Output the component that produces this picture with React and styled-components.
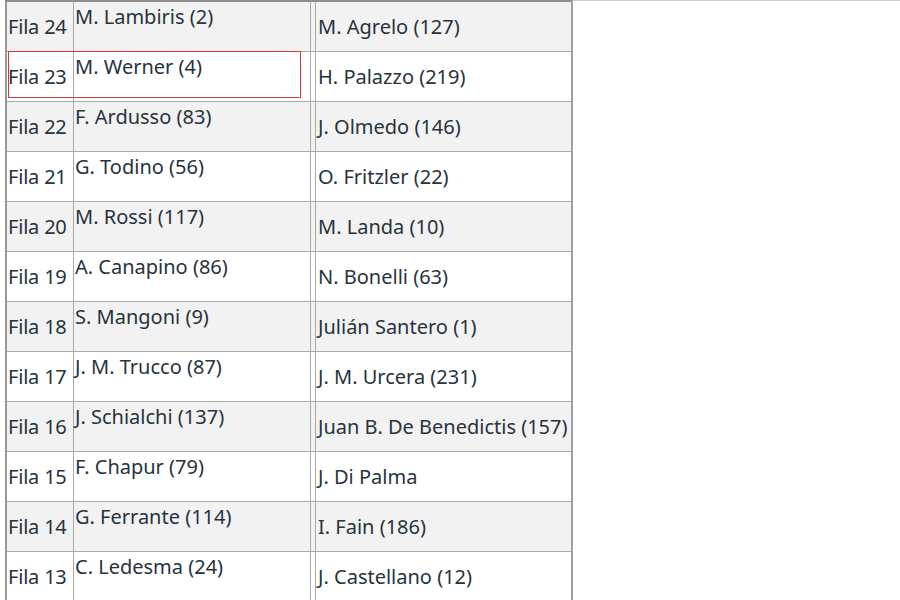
import styled, { createGlobalStyle } from "styled-components";

const GlobalStyle = createGlobalStyle`
  body {
    margin: 0;
    background: #fff;
    font-family: "Noto Sans", "Open Sans", sans-serif;
    overflow: hidden;
  }
`;

const Page = styled.div`
  display: flex;
  align-items: flex-start;
  padding-left: 5px;
`;

const Rest = styled.div`
  flex: 1;
  border-top: 1px solid #cfcfcf;
`;

const TableWrap = styled.div`
  position: relative;
`;

const Table = styled.table`
  border-collapse: collapse;
  border-top: 2px solid #8e8e8e;
  border-left: 2px solid #9a9a9a;
  border-right: 2px solid #a0a0a0;
  color: #27333d;
  font-size: 20px;
  line-height: 22px;
`;

const Row = styled.tr`
  height: 50px;
  background: ${({ $shaded }) => ($shaded ? "#f2f2f2" : "#ffffff")};
  border-bottom: 1px solid #a9a9a9;
`;

const LabelCell = styled.td`
  width: 65px;
  padding: 1px 0 0 1px;
  vertical-align: middle;
  white-space: nowrap;
  letter-spacing: -0.2px;
  border-right: 1px solid #a9a9a9;
`;

const NameCell = styled.td`
  width: 235px;
  padding: 4px 0 0 1px;
  vertical-align: top;
  white-space: nowrap;
  border-right: 1px solid #a9a9a9;
`;

const Gap = styled.td`
  width: 4px;
  padding: 0;
  border-right: 1px solid #a9a9a9;
`;

const OtherCell = styled.td`
  width: 253px;
  padding: 1px 0 0 2px;
  vertical-align: middle;
  white-space: nowrap;
`;

const Highlight = styled.div`
  position: absolute;
  left: 3px;
  top: 51px;
  width: 291px;
  height: 45px;
  border: 1.5px solid #d83a3a;
  pointer-events: none;
`;

const rows = [
  [24, "M. Lambiris (2)", "M. Agrelo (127)"],
  [23, "M. Werner (4)", "H. Palazzo (219)"],
  [22, "F. Ardusso (83)", "J. Olmedo (146)"],
  [21, "G. Todino (56)", "O. Fritzler (22)"],
  [20, "M. Rossi (117)", "M. Landa (10)"],
  [19, "A. Canapino (86)", "N. Bonelli (63)"],
  [18, "S. Mangoni (9)", "Julián Santero (1)"],
  [17, "J. M. Trucco (87)", "J. M. Urcera (231)"],
  [16, "J. Schialchi (137)", "Juan B. De Benedictis (157)"],
  [15, "F. Chapur (79)", "J. Di Palma"],
  [14, "G. Ferrante (114)", "I. Fain (186)"],
  [13, "C. Ledesma (24)", "J. Castellano (12)"],
];

const App = () => (
  <>
    <GlobalStyle />
    <Page>
      <TableWrap>
        <Table>
          <tbody>
            {rows.map(([fila, left, right]) => (
              <Row key={fila} $shaded={fila % 2 === 0}>
                <LabelCell>Fila {fila}</LabelCell>
                <NameCell>{left}</NameCell>
                <Gap />
                <OtherCell>{right}</OtherCell>
              </Row>
            ))}
          </tbody>
        </Table>
        <Highlight />
      </TableWrap>
      <Rest />
    </Page>
  </>
);

export default App;
